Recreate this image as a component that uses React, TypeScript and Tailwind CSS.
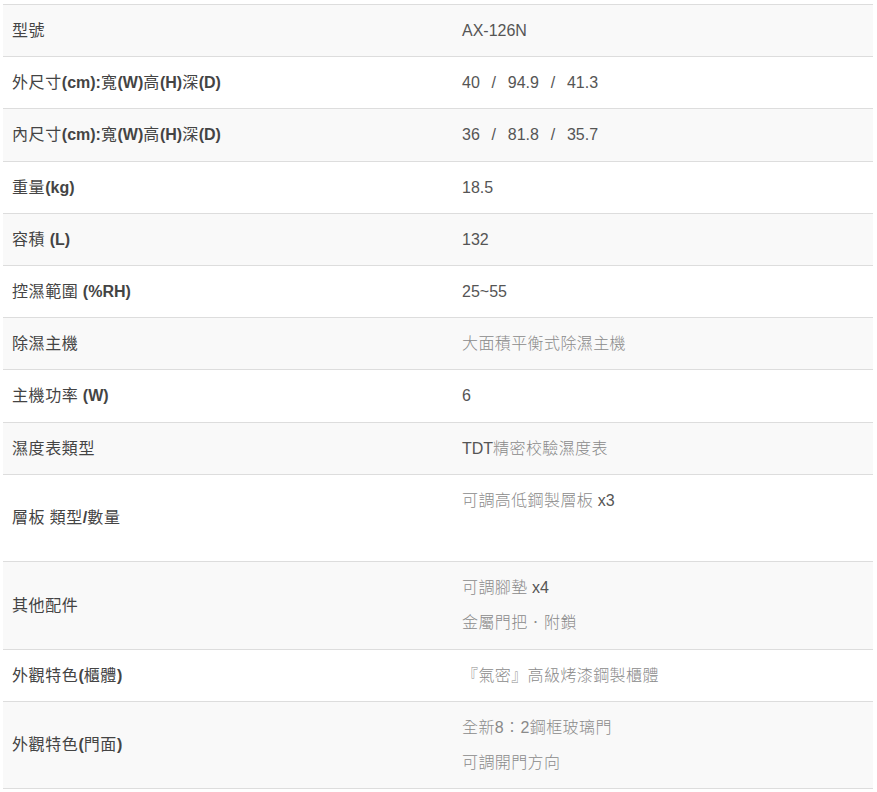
const Slash = () => <span className="inline-block w-[28px] text-center">/</span>;

function Cjk({ children }: { children: React.ReactNode }) {
  return <span className="text-[#8a8a8a] font-light tracking-[0.4px]">{children}</span>;
}

function Lat({ children }: { children: React.ReactNode }) {
  return <span className="text-[#555]">{children}</span>;
}

// labels: latin bold, cjk regular
function Label({ text }: { text: string }) {
  const parts = text.split(/([\u3000-\u9fff\uff00-\uffef]+)/).filter(Boolean);
  return (
    <>
      {parts.map((p, i) =>
        /[\u3000-\u9fff\uff00-\uffef]/.test(p) ? (
          <span key={i} className="font-normal tracking-[0.6px]">{p}</span>
        ) : (
          <span key={i} className="font-bold">{p}</span>
        )
      )}
    </>
  );
}

const rows: { label: string; value: React.ReactNode[] }[] = [
  { label: '型號', value: [<Lat>AX-126N</Lat>] },
  { label: '外尺寸(cm):寬(W)高(H)深(D)', value: [<Lat>40<Slash />94.9<Slash />41.3</Lat>] },
  { label: '內尺寸(cm):寬(W)高(H)深(D)', value: [<Lat>36<Slash />81.8<Slash />35.7</Lat>] },
  { label: '重量(kg)', value: [<Lat>18.5</Lat>] },
  { label: '容積 (L)', value: [<Lat>132</Lat>] },
  { label: '控濕範圍 (%RH)', value: [<Lat>25~55</Lat>] },
  { label: '除濕主機', value: [<Cjk>大面積平衡式除濕主機</Cjk>] },
  { label: '主機功率 (W)', value: [<Lat>6</Lat>] },
  { label: '濕度表類型', value: [<><Lat>TDT</Lat><Cjk>精密校驗濕度表</Cjk></>] },
  { label: '層板 類型/數量', value: [<><Cjk>可調高低鋼製層板</Cjk><Lat> x3</Lat></>, <>&nbsp;</>] },
  { label: '其他配件', value: [<><Cjk>可調腳墊</Cjk><Lat> x4</Lat></>, <Cjk>金屬門把．附鎖</Cjk>] },
  { label: '外觀特色(櫃體)', value: [<Cjk>『氣密』高級烤漆鋼製櫃體</Cjk>] },
  { label: '外觀特色(門面)', value: [<Cjk>全新8：2鋼框玻璃門</Cjk>, <Cjk>可調開門方向</Cjk>] },
];

export default function App() {
  return (
    <div className="bg-white min-h-screen pt-1 pl-[3px] font-['Liberation_Sans','Noto_Sans_CJK_TC',sans-serif] text-[16px]">
      <table className="w-[870px] border-collapse">
        <tbody>
          {rows.map((r, i) => (
            <tr key={i} className={`border-t border-b border-[#dddddd] ${i % 2 === 0 ? 'bg-[#f9f9f9]' : 'bg-white'}`}>
              <td className="w-[451px] pl-[9px] pr-2 py-2 align-middle text-[#444] leading-[35.2px]">
                <Label text={r.label} />
              </td>
              <td className="pl-2 pr-2 py-2 align-middle leading-[35.2px]">
                {r.value.map((v, j) => (
                  <div key={j}>{v}</div>
                ))}
              </td>
            </tr>
          ))}
        </tbody>
      </table>
    </div>
  );
}
